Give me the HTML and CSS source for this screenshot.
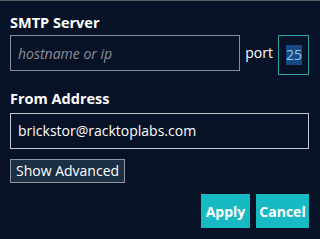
FILE: index.html
```html
<!DOCTYPE html>
<html>
<head>
<meta charset="utf-8">
<link rel="stylesheet" href="styles.css">
</head>
<body>
<div class="panel">
  <div class="label first">SMTP Server</div>
  <div class="row">
    <input class="field host" type="text" placeholder="hostname or ip">
    <span class="port-label">port</span>
    <div class="field port"><span class="sel">25</span></div>
  </div>
  <div class="label second">From Address</div>
  <div class="field email">brickstor@racktoplabs.com</div>
  <div class="adv-row"><button class="adv">Show Advanced</button></div>
  <div class="actions">
    <button class="btn apply">Apply</button>
    <button class="btn cancel">Cancel</button>
  </div>
</div>
</body>
</html>
```
FILE: styles.css
```css
html, body {
  margin: 0;
  padding: 0;
  background: #081226;
}
body {
  width: 320px;
  height: 239px;
  overflow: hidden;
  font-family: "Open Sans", "Noto Sans", sans-serif;
  color: #fff;
}
.panel {
  border-top: 1px solid #5a5f66;
  background: #081226;
  height: 238px;
  padding: 0 11px 0 10px;
  box-sizing: border-box;
}
.label {
  font-weight: bold;
  font-size: 14.5px;
  line-height: 20px;
  color: #fff;
}
.first { padding-top: 12px; }
.second { padding-top: 14px; }
.row {
  display: flex;
  align-items: flex-start;
  margin-top: 2px;
}
.field {
  box-sizing: border-box;
  border: 1px solid #8a8f96;
  background: transparent;
  color: #fff;
  font-family: inherit;
  font-size: 14px;
  height: 36px;
  padding: 0 7px;
  outline: none;
  margin: 0;
}
.host {
  flex: 1;
  min-width: 0;
}
.host::placeholder {
  color: #8a8f99;
  font-style: italic;
}
.port-label {
  font-size: 14px;
  line-height: 36px;
  margin-left: 5px;
  margin-right: 5px;
  height: 36px;
}
.port {
  flex: none;
  width: 31px;
  height: 40px;
  border-color: #2aa3ab;
  padding: 0 0 0 7px;
  display: flex;
  align-items: center;
}
.sel {
  background: #174a84;
  color: #8fc6f2;
  line-height: 20px;
  padding: 0;
  margin-top: -1px;
}
.email {
  margin-top: 4px;
  border-color: #c4c8cc;
  height: 36px;
  line-height: 34px;
  width: 299px;
}
.adv-row {
  margin-top: 10px;
}
.adv {
  background: #1a2e44;
  border: 1px solid #8f959c;
  color: #fff;
  font-family: inherit;
  font-size: 14px;
  height: 24px;
  line-height: 20px;
  padding: 0 5px;
  margin: 0;
}
.actions {
  display: flex;
  justify-content: flex-end;
  gap: 6px;
  margin-top: 11px;
}
.btn {
  background: #17b9c2;
  border: none;
  color: #fff;
  font-family: inherit;
  font-weight: bold;
  font-size: 14px;
  height: 34px;
  padding: 0;
  margin: 0;
}
.apply { width: 49px; }
.cancel { width: 53px; }
```
